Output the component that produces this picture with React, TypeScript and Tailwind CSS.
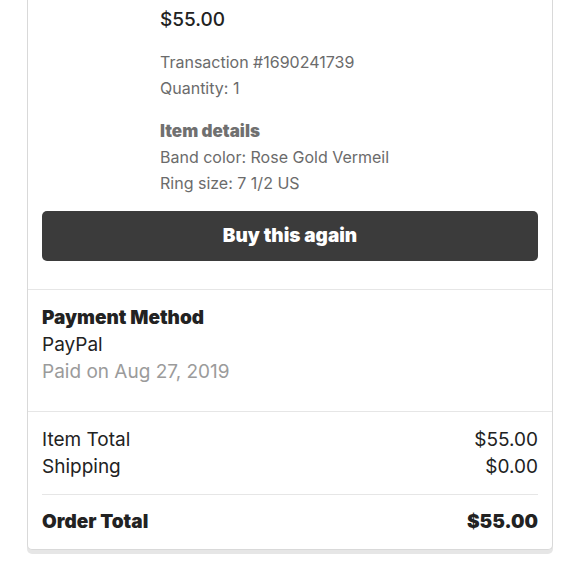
import React from 'react';

const Row = ({ label, value, bold }: { label: string; value: string; bold?: boolean }) => (
    <div className={`flex justify-between leading-[27px] text-[19px] ${bold ? 'font-black' : ''}`}>
        <span>{label}</span>
        <span>{value}</span>
    </div>
);

export default function App() {
    return (
        <div className="min-h-[580px] bg-white font-['Inter',sans-serif] text-[#222222]">
            <div className="ml-[27px] w-[526px] border-x border-b border-[#d9d9d9] rounded-b-[5px] shadow-[0_4px_0_#e6e6e6] bg-white">
                <div className="px-[14px] pt-[7px] pb-[28px] border-b border-[#e6e6e6]">
                    <div className="pl-[118px]">
                        <p className="text-[19px] font-medium leading-[26px]">$55.00</p>
                        <div className="mt-[17px] text-[16px] leading-[25.5px] text-[#6b6b6b]">
                            <p>Transaction #1690241739</p>
                            <p>Quantity: 1</p>
                        </div>
                        <div className="mt-[17px] text-[16px] leading-[26px] text-[#6b6b6b]">
                            <p className="text-[17px] font-black text-[#707070]">Item details</p>
                            <p>Band color: Rose Gold Vermeil</p>
                            <p>Ring size: 7 1/2 US</p>
                        </div>
                    </div>
                    <button className="mt-[15px] w-full h-[50px] rounded-[5px] bg-[#3b3b3b] text-white text-[19px] font-black">
                        Buy this again
                    </button>
                </div>

                <div className="px-[14px] pt-[14px] pb-[26px] border-b border-[#e6e6e6] text-[19px] leading-[27px]">
                    <p className="font-black">Payment Method</p>
                    <p>PayPal</p>
                    <p className="text-[#9b9b9b]">Paid on Aug 27, 2019</p>
                </div>

                <div className="px-[14px] pt-[14px] pb-[14px]">
                    <div className="pb-[14px] border-b border-[#e6e6e6]">
                        <Row label="Item Total" value="$55.00" />
                        <Row label="Shipping" value="$0.00" />
                    </div>
                    <div className="pt-[13px]">
                        <Row label="Order Total" value="$55.00" bold />
                    </div>
                </div>
            </div>
        </div>
    );
}
